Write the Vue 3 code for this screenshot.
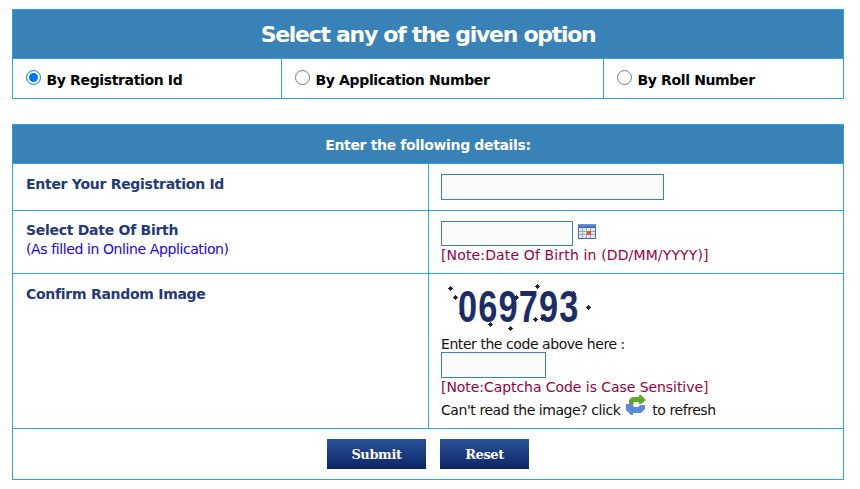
<template>
  <div class="page">
    <section class="box">
      <h1 class="title">Select any of the given option</h1>
      <div class="options">
        <label v-for="opt in options" :key="opt.id" class="option" :class="opt.id">
          <input type="radio" name="mode" :value="opt.id" v-model="mode" />
          <span>{{ opt.label }}</span>
        </label>
      </div>
    </section>

    <section class="box details">
      <h2 class="subtitle">Enter the following details:</h2>

      <div class="row row-reg">
        <div class="label"><b>Enter Your Registration Id</b></div>
        <div class="field">
          <input class="text reg-input" type="text" />
        </div>
      </div>

      <div class="row row-dob">
        <div class="label">
          <b>Select Date Of Birth</b>
          <span class="hint">(As filled in Online Application)</span>
        </div>
        <div class="field">
          <div class="dob-line">
            <input class="text dob-input" type="text" />
            <svg class="cal" width="18" height="15" viewBox="0 0 18 15">
              <defs>
                <linearGradient id="calTop" x1="0" y1="0" x2="0" y2="1">
                  <stop offset="0" stop-color="#6d9be0" />
                  <stop offset="1" stop-color="#3a63b0" />
                </linearGradient>
              </defs>
              <rect x="0" y="0" width="18" height="15" fill="#4f6a8c" />
              <rect x="0" y="0" width="18" height="4" fill="url(#calTop)" />
              <rect x="1" y="4" width="16" height="10" fill="#e3eaf4" />
              <path d="M1 7.500h16M1 10.500h16M4.500 4v10M8.500 4v10M12.500 4v10" stroke="#93a8c6" stroke-width="1" />
              <rect x="9" y="7" width="4" height="4" fill="#e8562a" />
            </svg>
          </div>
          <div class="note">[Note:Date Of Birth in (DD/MM/YYYY)]</div>
        </div>
      </div>

      <div class="row row-captcha">
        <div class="label"><b>Confirm Random Image</b></div>
        <div class="field">
          <div class="captcha">
            <span class="digits">069793</span>
            <i v-for="(s, i) in specks" :key="i" class="speck" :style="{ left: s[0] + 'px', top: s[1] + 'px' }"></i>
          </div>
          <div class="plain">Enter the code above here :</div>
          <input class="text code-input" type="text" />
          <div class="note captcha-note">[Note:Captcha Code is Case Sensitive]</div>
          <div class="plain refresh">
            Can't read the image? click
            <svg class="reload" width="20" height="20" viewBox="0 0 20 20">
              <path d="M3 10V5L6 2H13V0H15L20 5 15 9H13V7H8L7 10Z" fill="#5fa52e" />
              <path d="M0 9H6L8 12H12L14 10H19V14L15 18H7V20H5L0 15Z" fill="#5c8ad8" />
            </svg>
            to refresh
          </div>
        </div>
      </div>

      <div class="actions">
        <button class="btn submit" type="button">Submit</button>
        <button class="btn reset" type="button">Reset</button>
      </div>
    </section>
  </div>
</template>

<script setup>
import { ref } from 'vue'

const mode = ref('reg')

const options = [
  { id: 'reg', label: 'By Registration Id' },
  { id: 'app', label: 'By Application Number' },
  { id: 'roll', label: 'By Roll Number' }
]

// stray dots of the captcha picture
const specks = [
  [7, 3], [12, 12], [94, 1], [89, 8], [73, 12], [130, 8], [145, 22],
  [18, 28], [47, 39], [67, 43], [92, 34], [99, 33]
]
</script>

<style>
html, body {
  margin: 0;
  background: #fff;
}
</style>

<style scoped>
.page {
  padding: 9px 16px 0 12px;
  font-family: "DejaVu Sans", sans-serif;
  font-size: 13px;
  color: #111;
}

.box {
  border: 1px solid #2ea3e2;
}

.title {
  margin: 0;
  height: 48px;
  line-height: 50px;
  background: #3882b8;
  color: #fff;
  text-align: center;
  font-size: 22px;
  font-weight: 700;
  letter-spacing: -1.3px;
  border-bottom: 1px solid #2ea3e2;
}

.options {
  display: grid;
  grid-template-columns: 268px 322px 1fr;
  height: 39px;
}

.option {
  display: flex;
  align-items: center;
  gap: 5.5px;
  padding-left: 13px;
  padding-top: 2px;
  box-sizing: border-box;
  font-weight: 700;
  font-size: 14px;
  letter-spacing: -0.36px;
  color: #000;
  border-left: 1px solid #2ea3e2;
}

.option.reg {
  border-left: 0;
}

.option input {
  width: 15px;
  height: 15px;
  margin: -5px 0 0;
}

.details {
  margin-top: 25px;
}

.subtitle {
  margin: 0;
  height: 38px;
  line-height: 40px;
  background: #3882b8;
  color: #fff;
  text-align: center;
  font-size: 14px;
  font-weight: 700;
  letter-spacing: -0.35px;
  border-bottom: 1px solid #2ea3e2;
}

.row {
  display: grid;
  grid-template-columns: 416px 1fr;
  border-bottom: 1px solid #2ea3e2;
}

.row-reg { height: 46px; }
.row-dob { height: 62px; }
.row-captcha { height: 154px; }

.label {
  padding: 11px 0 0 13px;
  color: #1f3a78;
  font-size: 14px;
  letter-spacing: -0.28px;
  line-height: 18px;
  border-right: 1px solid #2ea3e2;
}

.row-dob .label { padding-top: 10px; }

.label b {
  display: block;
}

.hint {
  display: block;
  margin-top: 1px;
  color: #2200ee;
  font-size: 14px;
  letter-spacing: -0.4px;
  line-height: 18px;
}

.field {
  padding: 10px 0 0 12px;
}

.row-captcha .field { padding-top: 9px; }

.text {
  display: block;
  box-sizing: border-box;
  height: 26px;
  border: 1px solid #3a82b5;
  background: #fafafa;
  padding: 0;
  margin: 0;
}

.reg-input { width: 223px; }
.dob-input { width: 132px; height: 25px; }
.code-input { width: 105px; margin-top: -1px; }

.dob-line {
  display: flex;
  align-items: flex-start;
  gap: 5px;
}

.cal {
  margin-top: 3px;
}

.note {
  color: #99003f;
  font-size: 14px;
  letter-spacing: 0.14px;
  line-height: 18px;
}

.captcha-note {
  letter-spacing: -0.06px;
}

.plain {
  color: #111;
  font-size: 14px;
  letter-spacing: -0.44px;
  line-height: 18px;
}

.captcha {
  position: relative;
  width: 150px;
  height: 52px;
}

.digits {
  position: absolute;
  left: 17px;
  top: 1px;
  font-size: 44px;
  line-height: 46px;
  font-weight: 700;
  font-family: "Liberation Sans", sans-serif;
  color: #1b2d68;
  letter-spacing: 1.500px;
  transform: scaleX(0.78);
  transform-origin: left center;
}

.speck {
  position: absolute;
  width: 5px;
  height: 5px;
  background:
    linear-gradient(#1b2148 0 0) center / 5px 1px no-repeat,
    linear-gradient(#1b2148 0 0) center / 1px 5px no-repeat,
    linear-gradient(#1b2148 0 0) center / 3px 3px no-repeat;
}

.refresh {
  display: flex;
  align-items: center;
  gap: 6px;
  margin-top: 5px;
}

.reload {
  margin-top: -11px;
}

.actions {
  display: flex;
  justify-content: center;
  gap: 14px;
  height: 50px;
  align-items: center;
}

.btn {
  height: 30px;
  border: 0;
  padding: 0;
  background: linear-gradient(#2a5298, #0c2566);
  color: #fff;
  font-family: "DejaVu Serif", serif;
  font-weight: 700;
  font-size: 13px;
  letter-spacing: -0.4px;
}

.submit { width: 99px; }
.reset { width: 89px; }
</style>
